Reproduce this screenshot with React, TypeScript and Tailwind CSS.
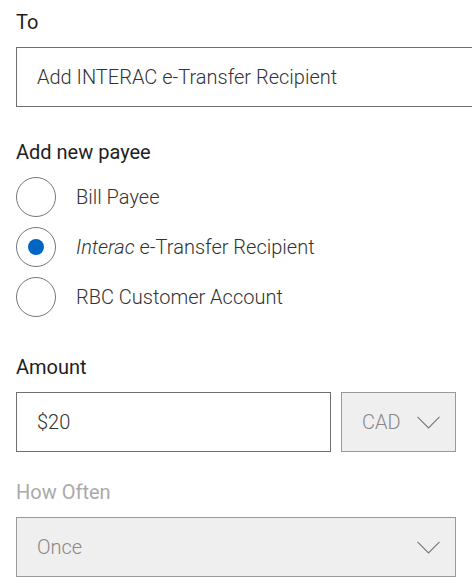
export default function App() {
  const payees = [
    { id: "bill", label: <>Bill Payee</>, checked: false },
    {
      id: "interac",
      label: (
        <>
          <i>Interac</i> e-Transfer Recipient
        </>
      ),
      checked: true,
    },
    { id: "rbc", label: <>RBC Customer Account</>, checked: false },
  ]

  const Chevron = () => (
    <svg width="23" height="13" viewBox="0 0 23 13" fill="none">
      <path d="M0.5 0.8 L11.5 12 L22.5 0.8" stroke="#777" strokeWidth="1.1" />
    </svg>
  )

  return (
    <div
      className="w-[472px] h-[588px] overflow-hidden bg-white pl-4 pt-[10px]"
      style={{ fontFamily: "Roboto, 'Liberation Sans', sans-serif" }}
    >
      <div className="h-6 leading-6 text-[20px] text-[#1e1e1e]">To</div>
      <div className="mt-[13px] w-[480px] h-[60px] border border-[#6f6f6f] flex items-center pl-5 text-[20px] font-light text-[#333]">
        Add INTERAC e-Transfer Recipient
      </div>

      <div className="mt-[33px] h-6 leading-6 text-[20px] text-[#1e1e1e]">Add new payee</div>
      <div className="mt-[13px] flex flex-col gap-[10px]">
        {payees.map(p => (
          <div key={p.id} className="flex items-center h-10">
            <div className="w-10 h-10 rounded-full border border-[#777] flex items-center justify-center">
              {p.checked && <div className="w-4 h-4 rounded-full bg-[#0066c4]" />}
            </div>
            <div className="ml-5 text-[20px] font-light text-[#333]">{p.label}</div>
          </div>
        ))}
      </div>

      <div className="mt-[38px] h-6 leading-6 text-[20px] text-[#1e1e1e]">Amount</div>
      <div className="mt-[13px] flex gap-[10px]">
        <div className="w-[315px] h-[60px] border border-[#6f6f6f] flex items-center pl-5 text-[20px] font-light text-[#333]">
          $20
        </div>
        <div className="w-[115px] h-[60px] border border-[#999] bg-[#efefef] flex items-center justify-between pl-5 pr-[15px] text-[20px] font-light text-[#888]">
          <span>CAD</span>
          <Chevron />
        </div>
      </div>

      <div className="mt-[28px] h-6 leading-6 text-[20px] text-[#aaa]">How Often</div>
      <div className="mt-[13px] w-[440px] h-[60px] border border-[#999] bg-[#efefef] flex items-center justify-between pl-5 pr-[15px] text-[20px] font-light text-[#888]">
        <span>Once</span>
        <Chevron />
      </div>
    </div>
  )
}
